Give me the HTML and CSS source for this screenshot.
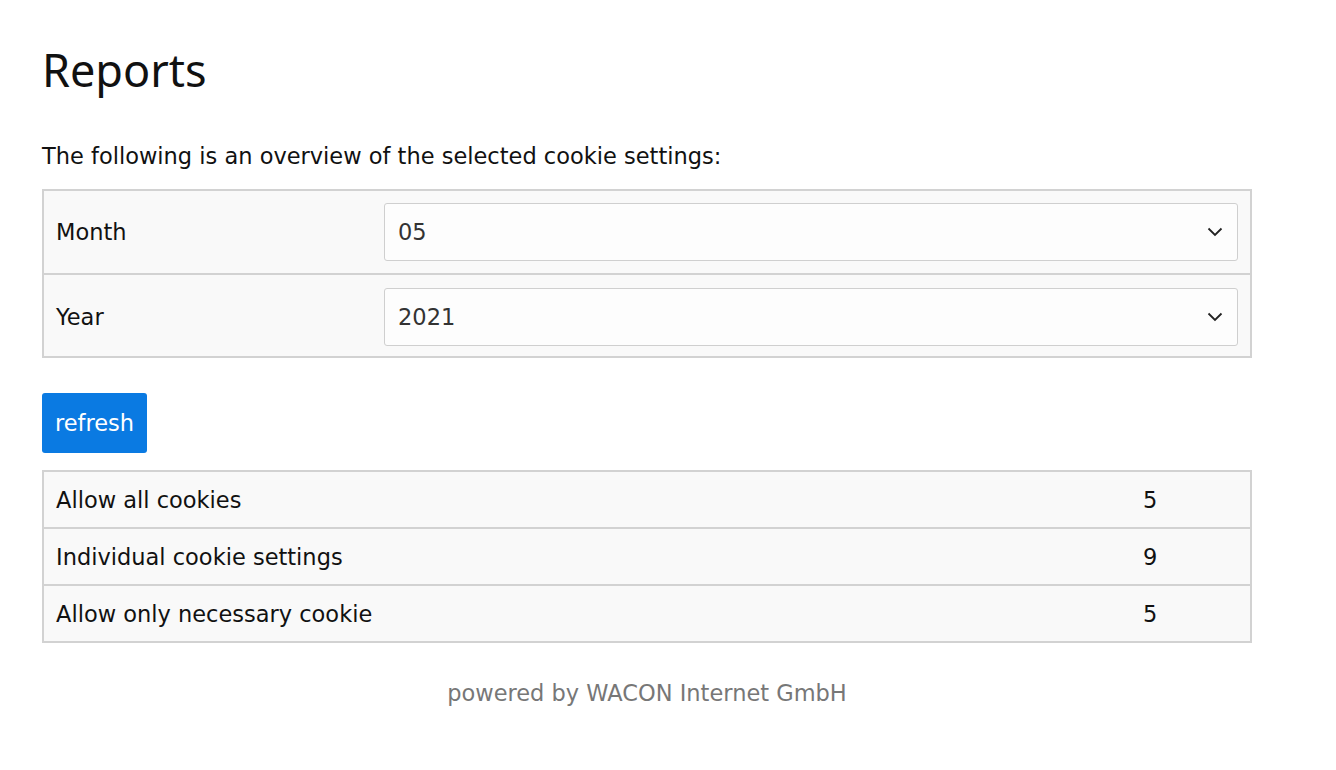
FILE: index.html
```html
<!DOCTYPE html>
<html lang="en">
<head>
<meta charset="utf-8">
<title>Reports</title>
<link rel="stylesheet" href="styles.css">
</head>
<body>
<main class="page">
  <h1 class="title">Reports</h1>
  <p class="intro">The following is an overview of the selected cookie settings:</p>
  <div class="panel filters">
    <div class="row">
      <div class="label">Month</div>
      <div class="field">
        <div class="select">
          <span class="select-value">05</span>
          <svg class="chevron" width="16" height="10" viewBox="0 0 16 10"><path d="M1.5 1.5 L8 8 L14.5 1.5" fill="none" stroke="#222" stroke-width="1.8"/></svg>
        </div>
      </div>
    </div>
    <div class="row">
      <div class="label">Year</div>
      <div class="field">
        <div class="select">
          <span class="select-value">2021</span>
          <svg class="chevron" width="16" height="10" viewBox="0 0 16 10"><path d="M1.5 1.5 L8 8 L14.5 1.5" fill="none" stroke="#222" stroke-width="1.8"/></svg>
        </div>
      </div>
    </div>
  </div>
  <button class="btn">refresh</button>
  <div class="panel results">
    <div class="row"><div class="name">Allow all cookies</div><div class="count">5</div></div>
    <div class="row"><div class="name">Individual cookie settings</div><div class="count">9</div></div>
    <div class="row"><div class="name">Allow only necessary cookie</div><div class="count">5</div></div>
  </div>
  <p class="footer">powered by WACON Internet GmbH</p>
</main>
</body>
</html>
```

FILE: styles.css
```css
html, body {
  margin: 0;
  padding: 0;
  background: #fff;
}
body {
  font-family: "DejaVu Sans", Verdana, sans-serif;
  font-size: 22.5px;
  color: #111;
}
.page {
  width: 1210px;
  padding: 42px 0 0 42px;
}
.title {
  font-family: "Noto Sans", sans-serif;
  font-weight: 400;
  font-size: 45px;
  line-height: 56px;
  margin: 0 0 45px;
  color: #111;
}
.intro {
  line-height: 26px;
  margin: 0 0 20px;
}
.panel {
  border: 2px solid #d2d2d2;
  background: #f9f9f9;
}
.row {
  display: flex;
  align-items: center;
}
.row + .row {
  border-top: 2px solid #d2d2d2;
}
.filters .row {
  height: 82px;
}
.filters .row + .row {
  height: 83px;
  align-items: flex-start;
  padding-top: 13px;
  box-sizing: border-box;
}
.filters .row + .row .label {
  line-height: 58px;
}
.filters .label {
  width: 326px;
  padding-left: 12px;
  box-sizing: border-box;
}
.filters .field {
  flex: 1;
  padding: 0 12px 0 14px;
}
.select {
  height: 56px;
  border: 1px solid #cfcfcf;
  border-radius: 3px;
  background: #fdfdfd;
  display: flex;
  align-items: center;
  justify-content: space-between;
  padding: 0 14px 0 13px;
  color: #333;
}
.chevron {
  display: block;
}
.btn {
  display: block;
  margin: 35px 0 17px;
  height: 60px;
  padding: 0 13px;
  border: none;
  border-radius: 3px;
  background: #0a7ae2;
  color: #fff;
  font-family: "DejaVu Sans", Verdana, sans-serif;
  font-size: 22.5px;
}
.results .row {
  height: 55px;
}
.results .name {
  flex: 1;
  padding-left: 12px;
}
.results .count {
  width: 119px;
  padding-left: 12px;
  box-sizing: border-box;
}
.footer {
  text-align: center;
  color: #777;
  line-height: 26px;
  margin: 37px 0 0;
}
```
